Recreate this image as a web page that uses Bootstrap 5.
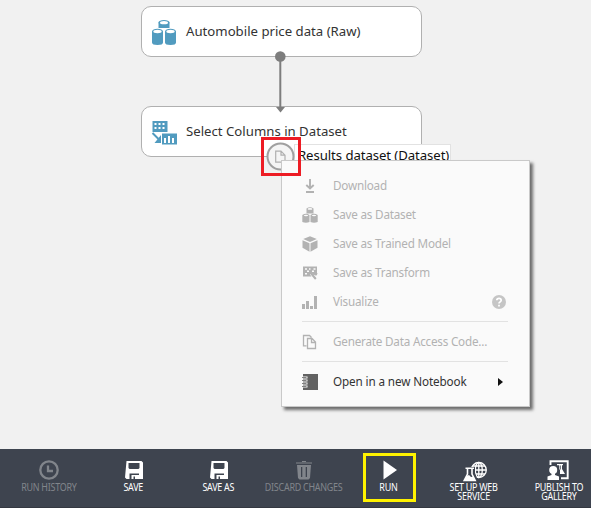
<!DOCTYPE html>
<html lang="en">
<head>
<meta charset="utf-8">
<meta name="viewport" content="width=device-width, initial-scale=1">
<title>Experiment canvas</title>
<link href="https://cdn.jsdelivr.net/npm/bootstrap@5.3.0/dist/css/bootstrap.min.css" rel="stylesheet">
<style>
  body { font-family: "Noto Sans", "Open Sans", sans-serif; background: #f1f1f1; color: #333; }
  .studio { height: 508px; width: 591px; }
  /* canvas */
  .module { left: 141px; width: 281px; height: 51px; border: 1px solid #b0b0b0; border-radius: 10px; background: #fff; padding: 0 0 0 9px; font-size: 13.2px; }
  .module svg { width: 26px; height: 26px; margin-right: 9px; }
  .module-a { top: 6px; }
  .module-b { top: 106px; }
  .link-line { left: 270px; top: 50px; }
  .port-label { left: 294px; top: 144px; width: 157px; height: 22px; background: #fff; border: 1px solid #e2e2e2; color: #111; font-size: 13.2px; letter-spacing: -.08px; line-height: 20px; padding-left: 3px; }
  .port { left: 266px; top: 142px; }
  .port-frame { left: 261px; top: 137px; width: 40px; height: 39px; border: 3px solid #ed1c24; z-index: 5; }
  /* context menu */
  .ctx { left: 281px; top: 160px; width: 249px; height: 247px; background: #fafafa; border: 1px solid #c9c9c9; box-shadow: 3px 3px 3px rgba(0,0,0,.55); padding: 10px 21px 0 20px; font-size: 11.7px; letter-spacing: -.21px; }
  .ctx-row { height: 29px; color: #b2b2b2; }
  .ctx-row svg.ico { width: 16px; height: 16px; margin-right: 15px; }
  .ctx-row.live { color: #333; letter-spacing: -.12px; }
  .ctx-rule { height: 1px; background: #e2e2e2; margin: 5px 0; }
  .ctx-help { margin-right: 2px; }
  /* command bar */
  .bar { height: 59px; background: #3e444f; border-bottom: 1px solid #343841; padding: 2px 0 0 6px; overflow: hidden; }
  .cmd { width: 85px; flex: none; color: #fff; font-size: 10.3px; letter-spacing: -.3px; line-height: 9px; }
  .cmd span { transform: scaleX(.87); }
  .cmd svg { height: 24px; width: 24px; margin: 7px 0 1px; overflow: visible; }
  .cmd.off { color: #81858b; }
  .cmd-frame { left: 363px; top: 453px; width: 53px; height: 49px; border: 3px solid #fff200; }
</style>
</head>
<body class="overflow-hidden">
<div class="studio position-relative d-flex flex-column overflow-hidden">
  <main class="flex-grow-1">
    <div class="module module-a position-absolute d-flex align-items-center">
      <svg viewBox="0 0 26 26"><g fill="#519bbf"><path d="M7.500 3.500v5.500h11V3.500z"/><ellipse cx="13" cy="3.500" rx="5.500" ry="2.500"/><path d="M1 12.500v11q0 2.500 5.500 2.500t5.500-2.500v-11zM14 12.500v11q0 2.500 5.500 2.500t5.500-2.500v-11z"/><ellipse cx="6.500" cy="12.500" rx="5.500" ry="2.800"/><ellipse cx="19.500" cy="12.500" rx="5.500" ry="2.800"/></g><g fill="#fff"><ellipse cx="13" cy="3.700" rx="4" ry="1.600"/><ellipse cx="6.500" cy="12.500" rx="4.200" ry="1.700"/><ellipse cx="19.500" cy="12.500" rx="4.200" ry="1.700"/></g></svg>
      <span>Automobile price data (Raw)</span>
    </div>
    <div class="module module-b position-absolute d-flex align-items-center">
      <svg viewBox="0 0 26 26"><path fill="#519bbf" d="M1.500 2h15v11h-15zM11 14.500h15v11H11z"/><path fill="#fff" d="M3.500 4h2v2h-2zm4 0h2v2h-2zm4 0h2v2h-2zM3.500 8h2v2h-2zm4 0h2v2h-2zm4 0h2v2h-2zM13 19h2v5h-2zm4-2h2v7h-2zm4 2h2v5h-2z"/><path d="M1.500 14l6 6" stroke="#519bbf" stroke-width="2"/><path fill="#519bbf" d="M10 16v8H3.500z"/></svg>
      <span>Select Columns in Dataset</span>
    </div>
    <svg class="link-line position-absolute" width="20" height="64"><path d="M10.300 6v52" stroke="#7d7d7d" stroke-width="2"/><circle cx="10.300" cy="6.500" r="5.300" fill="#7d7d7d"/><path d="M6 57h9l-4.500 5.500z" fill="#7d7d7d"/></svg>
    <div class="port-label position-absolute text-nowrap">Results dataset (Dataset)</div>
    <svg class="port position-absolute" width="30" height="30"><circle cx="14.500" cy="14.500" r="13" fill="#f5f5f5" stroke="#a0a0a0" stroke-width="2"/><path d="M9.700 9.200h5.300l4 4v7H9.700zM15 9.200v4h4" fill="none" stroke="#b0b0b0" stroke-width="1.200"/></svg>

    <div class="ctx position-absolute">
      <div class="ctx-row d-flex align-items-center"><svg class="ico" viewBox="0 0 16 16"><path d="M8 1v9M4.300 7L8 10.500 11.700 7M4 14h8" fill="none" stroke="currentColor" stroke-width="1.900"/></svg>Download</div>
      <div class="ctx-row d-flex align-items-center"><svg class="ico" viewBox="0 0 16 16"><path fill="currentColor" d="M4.500 1.500Q8-1 11.500 1.500V6.500h-7zM.3 8Q4 5.500 7.500 8v7q-3.500 1.500-7.200 0zM8.500 8q3.500-2.500 7.200 0v7q-3.700 1.500-7.200 0z"/><g fill="#fafafa"><ellipse cx="8" cy="1.900" rx="2.400" ry=".9"/><ellipse cx="4" cy="8.500" rx="2.200" ry=".8"/><ellipse cx="12" cy="8.500" rx="2.200" ry=".8"/></g></svg>Save as Dataset</div>
      <div class="ctx-row d-flex align-items-center"><svg class="ico" viewBox="0 0 16 16"><path fill="currentColor" d="M8 .3l6.800 2.800L8 6 1.200 3.100zM.5 4.300l7 3v8.500l-7-4zM15.500 4.300l-7 3v8.500l7-4z"/></svg>Save as Trained Model</div>
      <div class="ctx-row d-flex align-items-center"><svg class="ico" viewBox="0 0 16 16"><path fill="currentColor" d="M1 1.500h14v9l-2-1-1 1-3-3-1 2 1.500 2H1z"/><path fill="#fafafa" d="M3 3.300h2v1.500H3zm4 0h1.500v1.500H7zm4.500 0h2v1.500h-2zM5 5.500h2V7H5zm5 0h2V7h-2zM3 8h2v1.500H3z"/><path d="M8.300 7.500l5.500 6.500M13 10l2-2" stroke="currentColor" stroke-width="2"/></svg>Save as Transform</div>
      <div class="ctx-row d-flex align-items-center"><svg class="ico" viewBox="0 0 16 16"><path fill="currentColor" d="M0 10h3v5H0zm4-3h3v8H4zm4 5h3v3H8zm4-10h3v13h-3z"/></svg>Visualize
        <svg class="ctx-help ms-auto" width="14" height="14" viewBox="0 0 14 14"><circle cx="7" cy="7" r="7" fill="#c5c5c5"/><path d="M4.800 5.300Q4.900 3.400 7 3.400t2.200 1.800Q9.200 6.200 8 6.900 7 7.400 7 8.500M7 9.700v1.800" stroke="#fff" stroke-width="1.700" fill="none"/></svg></div>
      <div class="ctx-rule"></div>
      <div class="ctx-row d-flex align-items-center"><svg class="ico" viewBox="0 0 16 16"><path d="M4.500 11.800h-3V1.500h6l2 2M5.500 4.500H10l3.500 3.500v6.500h-8zM9.500 4.500v4h4" fill="none" stroke="currentColor" stroke-width="1.300"/></svg>Generate Data Access Code...</div>
      <div class="ctx-rule"></div>
      <div class="ctx-row live d-flex align-items-center"><svg class="ico" viewBox="0 0 16 16"><path fill="#626262" d="M1 0h15v16H1z"/><path d="M0 3.500h5.500M0 6.500h5.500M0 9.500h5.500M0 12.500h5.500" stroke="#fafafa" stroke-width="1.800"/><path d="M0 3.500h4.500M0 6.500h4.500M0 9.500h4.500M0 12.500h4.500" stroke="#626262" stroke-width=".8"/></svg>Open in a new Notebook
        <svg class="ms-auto me-1" width="6" height="8"><path d="M0 0l5 4-5 4z" fill="#111"/></svg></div>
    </div>
    <div class="port-frame position-absolute"></div>
  </main>

  <footer class="bar d-flex">
    <div class="cmd off d-flex flex-column align-items-center text-center"><svg viewBox="0 0 24 24"><circle cx="12" cy="12" r="8.700" fill="none" stroke="currentColor" stroke-width="2.300"/><path d="M11 7.500v5.500h5" fill="none" stroke="currentColor" stroke-width="2.300"/></svg><span>RUN HISTORY</span></div>
    <div class="cmd d-flex flex-column align-items-center text-center"><svg viewBox="0 0 24 24"><path fill="currentColor" fill-rule="evenodd" d="M4.500 3h15L21 4.500V21h-4v-5.500H7.500V21H4.500L3 19.500zM6.500 5v5l1 1h9l1-1V5z"/><path d="M9.500 21v-4H17v4h-4v-2.500h-1.500V21z" fill="currentColor"/></svg><span>SAVE</span></div>
    <div class="cmd d-flex flex-column align-items-center text-center"><svg viewBox="0 0 24 24"><path fill="currentColor" fill-rule="evenodd" d="M4.500 3h15L21 4.500V21h-4v-5.500H7.500V21H4.500L3 19.500zM6.500 5v5l1 1h9l1-1V5z"/><path d="M9.500 21v-4H17v4h-4v-2.500h-1.500V21z" fill="currentColor"/></svg><span>SAVE AS</span></div>
    <div class="cmd off d-flex flex-column align-items-center text-center text-nowrap"><svg viewBox="0 0 24 24"><path d="M4 5h16M10 3.500h4" stroke="currentColor" stroke-width="1.200"/><path fill="currentColor" fill-rule="evenodd" d="M5 7h14l-1 13-1.500 1.500h-9L6 20zM9 9v10h1.300V9zm4.700 0v10H15V9z"/></svg><span>DISCARD CHANGES</span></div>
    <div class="cmd d-flex flex-column align-items-center text-center"><svg viewBox="0 0 24 24"><path fill="currentColor" d="M6.500 2.500L20 12 6.500 21.500z"/></svg><span>RUN</span></div>
    <div class="cmd d-flex flex-column align-items-center text-center"><svg viewBox="0 0 24 24"><g fill="none" stroke="currentColor" stroke-width="1.300"><circle cx="16.800" cy="12" r="7.500"/><ellipse cx="16.800" cy="12" rx="3.500" ry="7.500"/><path d="M16.800 4.500v15M9 12h15M10.500 8h12.500M10.500 16h12.500"/></g><path d="M2.500 9h10.500v6l3 8H0l2.500-8z" fill="#3e444f"/><path d="M3.500 10.200h8.500M5.500 11v5L2.200 22.500h11L10 16V11" fill="none" stroke="currentColor" stroke-width="1.600"/><path fill="currentColor" d="M4.500 18l2.500-1 2 2 2.500-.5 2 4.500H2z"/></svg><span>SET UP WEB<br>SERVICE</span></div>
    <div class="cmd d-flex flex-column align-items-center text-center"><svg viewBox="0 0 24 24"><path d="M3.500 7V3.200h17.200v17H14" fill="none" stroke="currentColor" stroke-width="1.900"/><path fill="currentColor" d="M10 6h6v1.200h-1V11l3 5h-5v-4l-1-1V7.200h-2z"/><path d="M13.200 7.500v4" stroke="#3e444f"/><circle cx="6.200" cy="12" r="4" fill="currentColor"/><path fill="currentColor" d="M4.500 14h3.500v3l4 1.500V22H.5v-3.500l4-1.500z"/></svg><span>PUBLISH TO<br>GALLERY</span></div>
  </footer>
  <div class="cmd-frame position-absolute"></div>
</div>
<script src="https://cdn.jsdelivr.net/npm/bootstrap@5.3.0/dist/js/bootstrap.bundle.min.js"></script>
</body>
</html>
